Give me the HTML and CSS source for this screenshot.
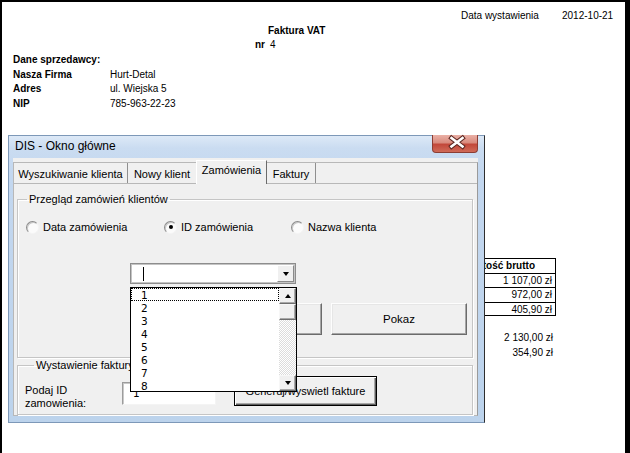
FILE: index.html
```html
<!DOCTYPE html>
<html lang="pl">
<head>
<meta charset="utf-8">
<title>Faktura VAT</title>
<link rel="stylesheet" href="styles.css">
</head>
<body>
<div class="screen">
  <div class="sheet">
    <span class="cell r1 cE">Data wystawienia</span>
    <span class="cell r1 cF date">2012-10-21</span>
    <span class="cell r2 cD b title-cell">Faktura VAT</span>
    <span class="cell r3 cC b">nr</span>
    <span class="cell r3 cD">4</span>
    <span class="cell r4 cA b">Dane sprzedawcy:</span>
    <span class="cell r5 cA b">Nasza Firma</span>
    <span class="cell r5 cB">Hurt-Detal</span>
    <span class="cell r6 cA b">Adres</span>
    <span class="cell r6 cB">ul. Wiejska 5</span>
    <span class="cell r7 cA b">NIP</span>
    <span class="cell r7 cB">785-963-22-23</span>
    <span class="cell r18 cE b tcell thead">Wartość brutto</span>
    <span class="cell r19 cE tcell num">1 107,00 zł</span>
    <span class="cell r20 cE tcell num">972,00 zł</span>
    <span class="cell r21 cE tcell num tlast">405,90 zł</span>
    <span class="cell r23 cE num">2 130,00 zł</span>
    <span class="cell r24 cE num">354,90 zł</span>
  </div>

  <div class="dialog">
    <div class="titlebar">
      <span class="title">DIS - Okno główne</span>
      <span class="close">
        <svg width="46" height="18" viewBox="0 0 46 18">
          <path d="M19.5 4 L30.5 12.5 M30.5 4 L19.5 12.5" stroke="#5b2620" stroke-width="4.6" stroke-linecap="square" fill="none"/>
          <path d="M19.5 4 L30.5 12.5 M30.5 4 L19.5 12.5" stroke="#ffffff" stroke-width="2.6" stroke-linecap="square" fill="none"/>
        </svg>
      </span>
    </div>
    <div class="client">
      <div class="tabs">
        <div class="tabrow">
          <span class="tab t1">Wyszukiwanie klienta</span>
          <span class="tab t2">Nowy klient</span>
          <span class="tab t3 active">Zamówienia</span>
          <span class="tab t4">Faktury</span>
        </div>
        <div class="page">
          <fieldset class="group g1">
            <legend>Przegląd zamówień klientów</legend>
            <div class="radios">
              <span class="radio rw1"><span class="dot"></span>Data zamówienia</span>
              <span class="radio rw2"><span class="dot checked"></span>ID zamówienia</span>
              <span class="radio"><span class="dot"></span>Nazwa klienta</span>
            </div>
            <div class="combo">
              <div class="combo-field"><span class="caret"></span></div>
              <span class="combo-btn"><span class="tri down"></span></span>
              <div class="dropdown">
                <div class="items">
                  <div class="item focus">1</div>
                  <div class="item">2</div>
                  <div class="item">3</div>
                  <div class="item">4</div>
                  <div class="item">5</div>
                  <div class="item">6</div>
                  <div class="item">7</div>
                  <div class="item">8</div>
                </div>
                <div class="scroll">
                  <span class="sb-btn sb-up"><span class="tri up"></span></span>
                  <span class="sb-thumb"></span>
                  <span class="sb-track"></span>
                  <span class="sb-btn sb-down"><span class="tri down"></span></span>
                </div>
              </div>
            </div>
            <div class="buttons">
              <span class="btn"></span>
              <span class="btn">Pokaz</span>
            </div>
          </fieldset>
          <fieldset class="group g2">
            <legend>Wystawienie faktury</legend>
            <div class="issue">
              <span class="lbl">Podaj ID<br>zamowienia:</span>
              <span class="textbox">1</span>
              <span class="btn default">Generuj/wyswietl fakture</span>
            </div>
          </fieldset>
        </div>
      </div>
    </div>
  </div>
</div>
</body>
</html>
```

FILE: styles.css
```css
body {
  margin: 0;
  background: #fff;
}

.screen {
  position: relative;
  width: 630px;
  height: 453px;
  box-sizing: border-box;
  border-top: 2px solid #000;
  border-left: 2px solid #000;
  border-right: 5px solid #000;
  overflow: hidden;
  font-family: "Liberation Sans", Arial, sans-serif;
  color: #000;
}

/* ---------- spreadsheet ---------- */
.sheet {
  display: grid;
  grid-template-columns: 8px 97px 145px 15px 191px 98px 1fr;
  grid-auto-rows: 14.65px;
  padding-top: 7px;
  font-size: 10px;
}

.cell {
  padding: 0 3px;
  line-height: 14px;
  white-space: nowrap;
  box-sizing: border-box;
  overflow: hidden;
}

.b { font-weight: bold; }

.r1 { grid-row: 1; }
.r2 { grid-row: 2; }
.r3 { grid-row: 3; }
.r4 { grid-row: 4; }
.r5 { grid-row: 5; }
.r6 { grid-row: 6; }
.r7 { grid-row: 7; }
.r18 { grid-row: 18; }
.r19 { grid-row: 19; }
.r20 { grid-row: 20; }
.r21 { grid-row: 21; }
.r23 { grid-row: 23; }
.r24 { grid-row: 24; }

.cA { grid-column: 2; }
.cB { grid-column: 3; }
.cC { grid-column: 4; }
.cD { grid-column: 5; }
.cE { grid-column: 6; }
.cF { grid-column: 7; }

.date { padding-left: 6px; }
.title-cell { padding-left: 1px; overflow: visible; }

.tcell {
  border: 1px solid #000;
  border-bottom: none;
  line-height: 13px;
}
.tlast { border-bottom: 1px solid #000; }
.thead { padding-left: 0; text-align: right; padding-right: 20px; }
.num { text-align: right; padding-right: 3px; }

/* ---------- dialog window ---------- */
.dialog {
  position: absolute;
  left: 6px;
  top: 133px;
  width: 477px;
  height: 288px;
  box-sizing: border-box;
  border: 1px solid #7d98b8;
  border-right-color: #2e2e2e;
  padding: 0 6px 6px 4px;
  display: flex;
  flex-direction: column;
  background: linear-gradient(to bottom, #dde9f7 0, #cadcf1 12px, #c3d7ef 40px, #bcd3ec 100%);
  z-index: 1;
  font-size: 11px;
}

.titlebar {
  height: 22px;
  display: flex;
  align-items: flex-start;
  flex: none;
}

.title {
  margin-left: 2px;
  margin-top: 3px;
  font-size: 12px;
  line-height: 14px;
  color: #000;
}

.close {
  margin-left: auto;
  margin-top: -1px;
  width: 46px;
  height: 18px;
  box-sizing: border-box;
  border: 1px solid #8c3d33;
  border-top: none;
  border-radius: 0 0 4px 4px;
  background: linear-gradient(to bottom, #eab0a6 0, #d98b7e 45%, #c2483a 55%, #cf6a58 100%);
  display: block;
}
.close svg {
  display: block;
  margin: -1px 0 0 -1px;
}

.client {
  flex: 1;
  background: #f0f0f0;
  padding-top: 4px;
  display: flex;
  flex-direction: column;
}

.tabs {
  flex: 1;
  border: 1px solid #b8b8b8;
  border-right-color: #9a9a9a;
  display: flex;
  flex-direction: column;
}

.tabrow {
  height: 20px;
  display: flex;
  position: relative;
  z-index: 2;
}

.tab {
  box-sizing: border-box;
  height: 20px;
  padding-top: 3px;
  line-height: 16px;
  text-align: center;
  white-space: nowrap;
  font-size: 11px;
}
.t1 { width: 114px; border-right: 1px solid #8f8f8f; }
.t2 { width: 68px; }
.t3 { width: 71px; }
.t4 { width: 49px; border-right: 1px solid #8f8f8f; }

.tab.active {
  margin-top: -3px;
  height: 24px;
  padding-top: 1px;
  background: #f0f0f0;
  border-top: 1px solid #fff;
  border-left: 1px solid #fff;
  border-right: 1px solid #6b6b6b;
}

.page {
  flex: 1;
  border-top: 1px solid #b8b8b8;
  display: flex;
  flex-direction: column;
  padding: 0 4px 0 3px;
}

.group {
  margin: 0;
  padding: 0;
  min-width: 0;
  border: 1px solid #c5c5c5;
  box-shadow: inset 1px 1px 0 #fff, 1px 1px 0 #fff;
}
.group legend {
  margin-left: 9px;
  padding: 0 2px;
  line-height: 13px;
  font-size: 11px;
}

.g1 {
  margin-top: 9px;
  padding: 0 5px 22px 0;
}

.g2 {
  margin-top: 1px;
  flex: 1;
  padding: 0 0 0 7px;
}

.radios {
  display: flex;
  margin-top: 14px;
  padding-left: 8px;
  height: 14px;
  font-size: 11px;
}
.radio {
  display: flex;
  align-items: center;
  gap: 4px;
  white-space: nowrap;
  line-height: 14px;
}
.rw1 { width: 138px; }
.rw2 { width: 127px; }

.dot {
  width: 13px;
  height: 13px;
  box-sizing: border-box;
  border-radius: 50%;
  border: 1px solid;
  border-color: #8a8a8a #f4f4f4 #f4f4f4 #8a8a8a;
  background: #fbfbfb;
  box-shadow: inset 1px 1px 0 #c8c8c8;
  display: flex;
  align-items: center;
  justify-content: center;
  flex: none;
}
.dot.checked::after {
  content: "";
  width: 4px;
  height: 4px;
  border-radius: 50%;
  background: #000;
}

.combo {
  position: relative;
  margin: 29px 0 0 112px;
  width: 166px;
  height: 21px;
  box-sizing: border-box;
  border: 1px solid #8d8d8d;
  box-shadow: inset 1px 1px 0 #c4c4c4, inset -1px -1px 0 #c4c4c4;
  background: #fff;
  display: flex;
}
.combo-field {
  flex: 1;
  display: flex;
  align-items: center;
}
.caret {
  width: 1px;
  height: 14px;
  background: #000;
  margin-left: 12px;
}
.combo-btn {
  width: 17px;
  height: 17px;
  margin: 1px 1px 0 0;
  box-sizing: border-box;
  background: #f0f0f0;
  border: 1px solid;
  border-color: #fff #8a8a8a #8a8a8a #fff;
  display: flex;
  align-items: center;
  justify-content: center;
}

.tri {
  width: 0;
  height: 0;
  border-left: 3.5px solid transparent;
  border-right: 3.5px solid transparent;
}
.tri.down { border-top: 4px solid #000; }
.tri.up { border-bottom: 4px solid #000; }

.dropdown {
  position: absolute;
  left: -1px;
  top: 23px;
  width: 167px;
  height: 105px;
  box-sizing: border-box;
  border: 1px solid #000;
  background: #fff;
  display: flex;
  overflow: hidden;
  z-index: 10;
}
.items {
  flex: 1;
  font-family: "DejaVu Sans", sans-serif;
  font-size: 10.5px;
}
.item {
  height: 13px;
  box-sizing: border-box;
  line-height: 12px;
  padding-left: 9px;
  border: 1px dotted transparent;
}
.item.focus { border-color: #000; }

.scroll {
  width: 17px;
  display: flex;
  flex-direction: column;
}
.sb-btn, .sb-thumb {
  box-sizing: border-box;
  background: #f0f0f0;
  border: 1px solid;
  border-color: #f7f7f7 #6e6e6e #6e6e6e #f7f7f7;
  box-shadow: inset -1px -1px 0 #a8a8a8;
  flex: none;
}
.sb-btn {
  height: 16px;
  display: flex;
  align-items: center;
  justify-content: center;
}
.sb-down { height: 16px; }
.sb-thumb { height: 16px; }
.sb-track {
  flex: 1;
  background-color: #fff;
  background-image: repeating-conic-gradient(#ffffff 0 25%, #dcdcdc 0 50%);
  background-size: 2px 2px;
}

.buttons {
  display: flex;
  justify-content: flex-end;
  gap: 9px;
  margin-top: 19px;
}
.btn {
  width: 136px;
  height: 32px;
  box-sizing: border-box;
  background: #f0f0f0;
  border: 1px solid;
  border-color: #fdfdfd #6b6b6b #6b6b6b #fdfdfd;
  box-shadow: inset -1px -1px 0 #a6a6a6, inset 1px 1px 0 #e6e6e6;
  display: flex;
  align-items: center;
  justify-content: center;
  white-space: nowrap;
  font-size: 11.5px;
}

.issue {
  display: flex;
  align-items: flex-start;
  font-size: 11px;
}
.lbl {
  width: 97px;
  margin-top: 12px;
  line-height: 13px;
}
.textbox {
  width: 94px;
  height: 23px;
  margin-top: 10px;
  box-sizing: border-box;
  border: 1px solid;
  border-color: #9c9c9c #f4f4f4 #f4f4f4 #9c9c9c;
  box-shadow: inset 1px 1px 0 #c9c9c9;
  background: #fff;
  padding: 3px 0 0 10px;
  font-family: "DejaVu Sans", sans-serif;
  font-size: 10.5px;
  line-height: 14px;
}
.btn.default {
  width: 143px;
  height: 30px;
  margin: 4px 0 0 18px;
  border: 1px solid #000;
  box-shadow: inset 1px 1px 0 #fff, inset -1px -1px 0 #5d5d5d, inset -2px -2px 0 #a8a8a8;
  font-size: 11px;
}
```
